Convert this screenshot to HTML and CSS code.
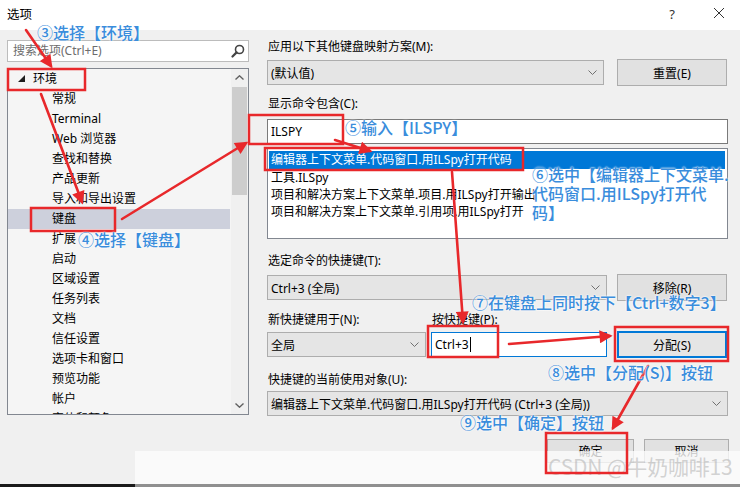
FILE: index.html
```html
<!DOCTYPE html>
<html lang="zh-CN">
<head>
<meta charset="utf-8">
<title>选项</title>
<link rel="stylesheet" href="styles.css">
</head>
<body>
<div class="titlebar">
  <span class="title">选项</span>
  <span class="help">?</span>
  <span class="close"><svg width="12" height="12" viewBox="0 0 12 12"><path d="M1 1 L11 11 M11 1 L1 11" stroke="#333" stroke-width="1" fill="none"/></svg></span>
</div>

<div class="main">
  <div class="left">
    <div class="search">
      <span class="ph">搜索选项(Ctrl+E)</span>
      <svg class="mag" width="14" height="14" viewBox="0 0 14 14"><circle cx="8.5" cy="5.5" r="4" stroke="#444" stroke-width="1.6" fill="none"/><path d="M5.6 8.4 L1.5 12.5" stroke="#444" stroke-width="2.2" stroke-linecap="round"/></svg>
    </div>
    <div class="tree">
      <div class="tree-items">
        <div class="row root"><svg class="tri" width="7" height="7" viewBox="0 0 7 7"><polygon points="7,0 7,7 0,7" fill="#1e1e1e"/></svg><span>环境</span></div>
        <div class="row child">常规</div>
        <div class="row child">Terminal</div>
        <div class="row child">Web 浏览器</div>
        <div class="row child">查找和替换</div>
        <div class="row child">产品更新</div>
        <div class="row child">导入和导出设置</div>
        <div class="row child sel">键盘</div>
        <div class="row child">扩展</div>
        <div class="row child">启动</div>
        <div class="row child">区域设置</div>
        <div class="row child">任务列表</div>
        <div class="row child">文档</div>
        <div class="row child">信任设置</div>
        <div class="row child">选项卡和窗口</div>
        <div class="row child">预览功能</div>
        <div class="row child">帐户</div>
        <div class="row child">字体和颜色</div>
      </div>
      <div class="vscroll">
        <div class="sbtn"><svg width="9" height="5" viewBox="0 0 9 5"><polyline points="0.5,4.5 4.5,0.8 8.5,4.5" stroke="#606060" stroke-width="1.4" fill="none"/></svg></div>
        <div class="thumb"></div>
        <div class="sfill"></div>
        <div class="sbtn"><svg width="9" height="5" viewBox="0 0 9 5"><polyline points="0.5,0.5 4.5,4.2 8.5,0.5" stroke="#606060" stroke-width="1.4" fill="none"/></svg></div>
      </div>
    </div>
  </div>

  <div class="right">
    <div class="label l1">应用以下其他键盘映射方案(M):</div>
    <div class="line r1">
      <div class="combo c-scheme"><span>(默认值)</span><svg class="chev" width="9" height="5" viewBox="0 0 9 5"><polyline points="0.5,0.5 4.5,4.5 8.5,0.5" stroke="#707070" stroke-width="1" fill="none"/></svg></div>
      <div class="btn">重置(E)</div>
    </div>
    <div class="label l2">显示命令包含(C):</div>
    <div class="input i-filter">ILSPY</div>
    <div class="list">
      <div class="item selitem">编辑器上下文菜单.代码窗口.用ILSpy打开代码</div>
      <div class="item">工具.ILSpy</div>
      <div class="item">项目和解决方案上下文菜单.项目.用ILSpy打开输出</div>
      <div class="item">项目和解决方案上下文菜单.引用项.用ILSpy打开</div>
    </div>
    <div class="label l3">选定命令的快捷键(T):</div>
    <div class="line r3">
      <div class="combo c-short"><span>Ctrl+3 (全局)</span><svg class="chev" width="9" height="5" viewBox="0 0 9 5"><polyline points="0.5,0.5 4.5,4.5 8.5,0.5" stroke="#707070" stroke-width="1" fill="none"/></svg></div>
      <div class="btn">移除(R)</div>
    </div>
    <div class="line labels">
      <div class="label lab-scope">新快捷键用于(N):</div>
      <div class="label lab-key">按快捷键(P):</div>
    </div>
    <div class="line r4">
      <div class="combo c-scope"><span>全局</span><svg class="chev" width="9" height="5" viewBox="0 0 9 5"><polyline points="0.5,0.5 4.5,4.5 8.5,0.5" stroke="#707070" stroke-width="1" fill="none"/></svg></div>
      <div class="input i-key">Ctrl+3<span class="caret"></span></div>
      <div class="btn btn-focus">分配(S)</div>
    </div>
    <div class="label l5">快捷键的当前使用对象(U):</div>
    <div class="combo c-used"><span>编辑器上下文菜单.代码窗口.用ILSpy打开代码 (Ctrl+3 (全局))</span><svg class="chev" width="9" height="5" viewBox="0 0 9 5"><polyline points="0.5,0.5 4.5,4.5 8.5,0.5" stroke="#707070" stroke-width="1" fill="none"/></svg></div>
    <div class="line footer">
      <div class="btn fbtn ok">确定</div>
      <div class="btn fbtn">取消</div>
    </div>
  </div>
</div>

<div class="veil"></div>
<div class="watermark">CSDN @牛奶咖啡13</div>
<div class="bottombar"><div class="bb-dark"></div><div class="bb-gray"></div></div>

<svg class="marks" width="740" height="487" viewBox="0 0 740 487">
  <defs>
    <marker id="ah" viewBox="0 0 10 10" refX="8" refY="5" markerWidth="5.5" markerHeight="5" orient="auto" markerUnits="strokeWidth">
      <path d="M0,0 L10,5 L0,10 z" fill="#e8282b"/>
    </marker>
  </defs>
  <g fill="none" stroke="#e8282b" stroke-width="2.5">
    <rect x="8" y="69" width="77" height="21"/>
    <rect x="31" y="208" width="84" height="23"/>
    <rect x="249" y="115" width="94" height="29"/>
    <rect x="265" y="148" width="258" height="22"/>
    <rect x="428" y="326" width="70" height="31"/>
    <rect x="615" y="327" width="113" height="34"/>
    <rect x="546" y="433" width="81" height="40"/>
  </g>
  <g stroke="#e8282b" stroke-width="2.6" stroke-linecap="round" marker-end="url(#ah)">
    <line x1="26" y1="30" x2="51" y2="66"/>
    <line x1="41" y1="94" x2="82" y2="202"/>
    <line x1="122" y1="219" x2="246" y2="143"/>
    <line x1="335" y1="140" x2="370" y2="151"/>
    <line x1="452" y1="172" x2="463" y2="322"/>
    <line x1="509" y1="344" x2="610" y2="336"/>
    <line x1="648" y1="366" x2="613" y2="428"/>
  </g>
</svg>

<div class="note n3">③选择【环境】</div>
<div class="note n4">④选择【键盘】</div>
<div class="note n5">⑤输入【ILSPY】</div>
<div class="note n6">⑥选中【编辑器上下文菜单.<br>代码窗口.用ILSpy打开代<br>码】</div>
<div class="note n7">⑦在键盘上同时按下【Ctrl+数字3】</div>
<div class="note n8">⑧选中【分配(S)】按钮</div>
<div class="note n9">⑨选中【确定】按钮</div>
</body>
</html>
```

FILE: styles.css
```css
html, body {
  margin: 0;
  padding: 0;
}
body {
  width: 740px;
  height: 487px;
  background: #f0f0f0;
  font-family: "Noto Sans", "Noto Sans CJK SC", sans-serif;
  font-size: 12px;
  color: #000;
  position: relative;
  overflow: hidden;
}

/* title bar */
.titlebar {
  height: 30px;
  background: #ffffff;
  display: flex;
  align-items: center;
  position: relative;
}
.title {
  margin-left: 7px;
  font-size: 12.5px;
  font-family: "Noto Sans CJK SC", sans-serif;
  line-height: 16px;
  margin-top: -2px;
}
.help {
  margin-left: auto;
  width: 12px;
  text-align: center;
  font-size: 13px;
  color: #333;
  margin-right: 35px;
  margin-top: -2px;
}
.close {
  width: 12px;
  height: 12px;
  margin-right: 15px;
  margin-top: -4px;
  display: flex;
}

/* layout */
.main {
  display: flex;
  align-items: flex-start;
}
.left {
  margin-left: 7px;
  width: 242px;
  padding-top: 10px;
}
.search {
  height: 22px;
  box-sizing: border-box;
  border: 1px solid #bcbcbc;
  background: #ffffff;
  display: flex;
  align-items: center;
  padding: 0 3px 0 5px;
}
.ph {
  color: #6d6d6d;
  line-height: 16px;
  font-size: 12px;
}
.mag {
  margin-left: auto;
}
.tree {
  margin-top: 6px;
  height: 347px;
  box-sizing: border-box;
  border: 1px solid #828790;
  background: #f5f5f5;
  display: flex;
  overflow: hidden;
}
.tree-items {
  width: 222px;
  height: 345px;
  overflow: hidden;
}
.row {
  height: 20px;
  line-height: 20px;
  display: flex;
  align-items: center;
  white-space: nowrap;
}
.root {
  padding-left: 10px;
}
.root .tri {
  margin-right: 8px;
  margin-top: -1px;
}
.child {
  padding-left: 44px;
}
.sel {
  background: #cdd0dc;
}
.vscroll {
  margin-left: 1px;
  width: 17px;
  display: flex;
  flex-direction: column;
  background: #f0f0f0;
}
.sbtn {
  height: 17px;
  display: flex;
  align-items: center;
  justify-content: center;
}
.thumb {
  margin: 1px 1px 0 1px;
  height: 108px;
  background: #cdcdcd;
}
.sfill {
  flex: 1;
}

/* right side */
.right {
  margin-left: 18px;
  width: 461px;
  padding-top: 9px;
}
.label {
  height: 16px;
  line-height: 16px;
  padding-left: 1px;
  white-space: nowrap;
}
.line {
  display: flex;
  align-items: center;
}
.combo {
  height: 25px;
  box-sizing: border-box;
  border: 1px solid #adadad;
  background: #e5e5e5;
  display: flex;
  align-items: center;
  justify-content: space-between;
  padding: 0 6px 0 3px;
  white-space: nowrap;
  overflow: hidden;
}
.btn {
  height: 27px;
  box-sizing: border-box;
  border: 1px solid #adadad;
  background: #e1e1e1;
  display: flex;
  align-items: center;
  justify-content: center;
  width: 110px;
}
.input {
  height: 25px;
  box-sizing: border-box;
  border: 1px solid #7a7a7a;
  background: #ffffff;
  display: flex;
  align-items: center;
  padding-left: 3px;
}

.r1 {
  margin-top: 4px;
  gap: 13px;
}
.c-scheme {
  width: 337px;
}
.l2 {
  margin-top: 10px;
}
.i-filter {
  margin-top: 7px;
  width: 461px;
}
.list {
  margin-top: 4px;
  height: 91px;
  box-sizing: border-box;
  border: 1px solid #828790;
  background: #ffffff;
  padding: 2px 2px 0 1px;
  overflow: hidden;
}
.item {
  height: 17px;
  line-height: 17px;
  padding-left: 2px;
  white-space: nowrap;
}
.selitem {
  background: #0078d7;
  color: #ffffff;
  height: 18px;
  line-height: 18px;
}
.l3 {
  margin-top: 14px;
}
.r3 {
  margin-top: 5px;
  gap: 10px;
}
.c-short {
  width: 340px;
}
.labels {
  margin-top: 11px;
}
.lab-scope {
  width: 163px;
}
.r4 {
  margin-top: 3px;
  gap: 0;
}
.c-scope {
  width: 159px;
}
.i-key {
  margin-left: 5px;
  width: 176px;
  border-color: #0078d7;
}
.caret {
  display: inline-block;
  width: 1px;
  height: 15px;
  background: #000;
  margin-left: 1px;
}
.btn-focus {
  margin-left: 10px;
  border: 2px solid #0078d7;
  background: #e5e5e5;
}
.l5 {
  margin-top: 14px;
}
.c-used {
  margin-top: 3px;
  width: 461px;
}
.footer {
  margin-top: 23px;
  justify-content: flex-end;
  gap: 10px;
  margin-right: -1px;
}
.fbtn {
  height: 24px;
  width: 85px;
}
.ok {
  width: 87px;
}

/* screenshot artefacts */
.veil {
  position: absolute;
  left: 135px;
  top: 451px;
  width: 605px;
  height: 33px;
  background: rgba(252, 252, 252, 0.78);
}
.watermark {
  position: absolute;
  left: 548px;
  top: 451px;
  font-family: "Noto Sans CJK SC", sans-serif;
  font-size: 21px;
  line-height: 30px;
  color: rgba(175, 175, 175, 0.55);
  white-space: nowrap;
  letter-spacing: -0.2px;
}
.bottombar {
  position: absolute;
  left: 0;
  top: 484px;
  width: 740px;
  height: 3px;
  display: flex;
}
.bb-dark {
  width: 135px;
  background: #1a1a1a;
}
.bb-gray {
  flex: 1;
  background: #8f8f8f;
}

.marks {
  position: absolute;
  left: 0;
  top: 0;
  pointer-events: none;
}

.note {
  position: absolute;
  font-family: "Noto Sans CJK SC", sans-serif;
  font-size: 16px;
  line-height: 19px;
  font-weight: 500;
  color: #3a8ddc;
  white-space: nowrap;
  text-shadow: 0 0 2px #ffffff, 0 0 2px #ffffff;
}
.n3 { left: 37px; top: 23px; }
.n4 { left: 78px; top: 230px; }
.n5 { left: 345px; top: 118px; }
.n6 { left: 532px; top: 165px; }
.n7 { left: 472px; top: 293px; }
.n8 { left: 548px; top: 363px; }
.n9 { left: 460px; top: 413px; }
```
